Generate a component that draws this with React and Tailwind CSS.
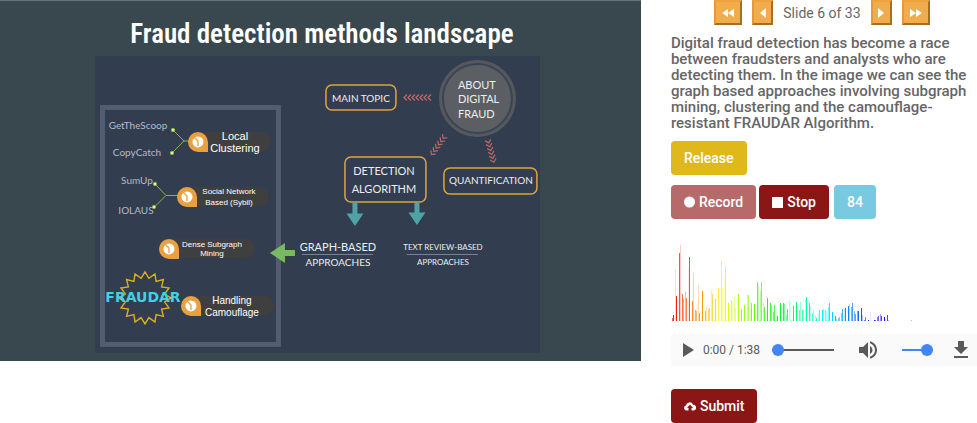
import React from "react";

const PINS = [
  { x: 198, y: 142, end: 271, cx: 235, size: 11, lines: [["Local", 140], ["Clustering", 152]] },
  { x: 187, y: 197, end: 269, cx: 229, size: 8, lines: [["Social Network", 194], ["Based (Sybil)", 205]] },
  { x: 169, y: 249, end: 255, cx: 212, size: 8, lines: [["Dense Subgraph", 247], ["Mining", 256]] },
  { x: 191, y: 306, end: 274, cx: 232, size: 10, lines: [["Handling", 304], ["Camouflage", 316]] },
];

// [x, height, opacity] for each bar of the spectrum
const BARS = [
  [1, 3, 0.6], [2, 6, 0.9], [4, 52, 0.15], [5, 25, 1], [8, 68, 0.8], [9, 76, 0.25], [11, 27, 0.7], [12, 22, 0.5],
  [14, 29, 0.4], [15, 23, 0.7], [17, 52, 0.1], [18, 64, 1], [21, 20, 0.8], [22, 48, 0.3], [24, 11, 0.6], [25, 10, 0.6],
  [27, 36, 0.3], [28, 8, 0.9], [31, 30, 1], [34, 10, 0.8], [35, 14, 0.3], [37, 12, 0.6], [38, 13, 0.6], [40, 31, 0.35],
  [41, 27, 0.7], [44, 22, 1], [45, 48, 0.08], [47, 33, 0.7], [48, 33, 0.15], [50, 60, 0.85], [51, 33, 0.4], [53, 44, 0.25],
  [54, 54, 1], [57, 18, 1], [60, 21, 0.7], [61, 20, 0.25], [63, 25, 0.4], [64, 13, 0.4], [66, 8, 0.2], [67, 27, 0.9],
  [70, 12, 1], [73, 16, 0.9], [74, 15, 0.2], [76, 26, 0.4], [77, 26, 0.6], [79, 12, 0.2], [80, 18, 0.9], [83, 17, 1],
  [86, 39, 0.9], [87, 36, 0.3], [89, 30, 0.4], [90, 39, 0.7], [92, 18, 0.3], [93, 14, 0.8], [96, 23, 1], [99, 18, 0.8],
  [100, 16, 0.5], [102, 9, 0.6], [103, 16, 0.7], [105, 7, 0.2], [106, 5, 1], [109, 18, 1], [112, 18, 0.9], [113, 17, 0.5],
  [115, 6, 0.5], [116, 12, 0.8], [118, 21, 0.25], [119, 19, 0.15], [122, 15, 1], [125, 19, 1], [126, 17, 0.3],
  [128, 11, 0.6], [129, 19, 0.4], [131, 11, 0.7], [132, 12, 0.4], [134, 22, 0.25], [135, 24, 1], [138, 18, 0.9],
  [139, 15, 0.3], [141, 8, 0.7], [142, 11, 0.4], [144, 6, 0.3], [145, 3, 0.9], [147, 8, 0.3], [148, 11, 0.8], [151, 11, 1],
  [152, 12, 0.5], [154, 11, 0.6], [155, 10, 0.3], [157, 14, 0.5], [158, 18, 0.9], [161, 9, 1], [164, 5, 1], [165, 2, 0.4],
  [167, 3, 0.6], [168, 4, 0.6], [170, 8, 0.5], [171, 12, 0.8], [173, 13, 0.2], [174, 13, 1], [177, 15, 1], [178, 17, 0.3],
  [180, 14, 0.5], [181, 18, 0.7], [183, 10, 0.5], [184, 7, 0.6], [186, 10, 0.5], [187, 10, 0.9], [190, 13, 0.9],
  [191, 6, 0.3], [193, 1, 0.6], [194, 4, 0.6], [197, 1, 0.9], [199, 9, 0.1], [203, 1, 0.9], [204, 1, 0.5], [206, 4, 0.5],
  [207, 5, 0.6], [209, 7, 0.4], [210, 5, 0.8], [213, 4, 1], [214, 2, 0.2], [216, 6, 0.8], [217, 1, 0.3], [240, 1, 0.4],
];

const BURST = Array.from({ length: 32 }, (_, i) => {
  const r = i % 2 === 0 ? 26 : 20;
  const a = (i * Math.PI) / 16 - Math.PI / 2;
  return `${145 + r * Math.cos(a)},${298 + r * Math.sin(a)}`;
}).join(" ");

function Chevrons({ x, y, angle, count }) {
  return (
    <g transform={`translate(${x} ${y}) rotate(${angle})`} fill="none" stroke="#c06a68" strokeWidth="1.200">
      {Array.from({ length: count }, (_, i) => (
        <path key={i} d={`M${i * 4} -3l3 3l-3 3`} />
      ))}
    </g>
  );
}

function Pin({ pin }) {
  const { x, y, end, cx, size, lines } = pin;
  return (
    <g>
      <rect x={x} y={y - 10} width={end - x} height="19" rx="9" fill="#3f3f40" />
      <path d={`M${x} ${y - 10}a10 10 0 1 0 0 20h10v-10a10 10 0 0 0 -10 -10z`} fill="#e8a040" />
      <circle cx={x} cy={y} r="5.500" fill="#fff" />
      <path d={`M${x - 4} ${y - 5}l4 4v5`} fill="none" stroke="#e8a040" strokeWidth="1.300" />
      {lines.map(([text, ty]) => (
        <text key={text} x={cx} y={ty} fontSize={size} textAnchor="middle" fill="#fff" className="font-['Liberation_Sans',sans-serif]">
          {text}
        </text>
      ))}
    </g>
  );
}

function Slide() {
  return (
    <svg viewBox="0 0 641 361" className="block h-auto w-full bg-[#37474f] font-[Lato,sans-serif]" role="img" aria-label="Fraud detection methods landscape">
      <rect width="641" height="361" fill="#38484e" />
      <rect width="641" height="1" fill="#66737b" />
      <text x="322" y="43" fontSize="27" fontWeight="600" textAnchor="middle" fill="#fff" className="font-['Roboto_Condensed','Liberation_Sans_Narrow',sans-serif]">
        Fraud detection methods landscape
      </text>
      <rect x="95" y="56" width="445" height="297" fill="#323d50" />
      <rect x="102.500" y="107.500" width="176" height="237" fill="none" stroke="#545c70" strokeWidth="5" />

      <circle cx="477.500" cy="98.500" r="37" fill="#5b5e63" stroke="#55595f" strokeWidth="3" />
      <circle cx="477.500" cy="98.500" r="34.500" fill="#5b5e63" stroke="#3c4352" strokeWidth="2" />
      <g fill="#eceef1" fontSize="11">
        <text x="458" y="89">ABOUT</text>
        <text x="458" y="103">DIGITAL</text>
        <text x="458" y="118">FRAUD</text>
      </g>

      <g fill="none" stroke="#e0a43a" strokeWidth="1.500">
        <rect x="326" y="85" width="70" height="25" rx="6" />
        <rect x="345" y="157" width="81" height="45" rx="6" />
        <rect x="444" y="168" width="93" height="26" rx="6" />
      </g>
      <g fill="#eceef1" textAnchor="middle">
        <text x="361" y="102" fontSize="10">MAIN TOPIC</text>
        <text x="384" y="175" fontSize="11">DETECTION</text>
        <text x="384" y="193" fontSize="11">ALGORITHM</text>
        <text x="491" y="184" fontSize="10">QUANTIFICATION</text>
        <text x="338" y="251" fontSize="11">GRAPH-BASED</text>
        <text x="338" y="266" fontSize="10">APPROACHES</text>
        <text x="443" y="250" fontSize="8">TEXT REVIEW-BASED</text>
        <text x="443" y="265" fontSize="8">APPROACHES</text>
      </g>
      <path d="M302 254.500h71M407 254.500h71" stroke="#7d8594" strokeWidth="1" />

      <Chevrons x={431} y={97.5} angle={180} count={7} />
      <Chevrons x={445} y={136} angle={126} count={6} />
      <Chevrons x={488} y={140} angle={75} count={6} />

      <path d="M352.500 202.500h5v11h6l-8.500 12.500l-8.500 -12.500h6zM414.500 202.500h5v10h6l-8.500 12.500l-8.500 -12.500h6z" fill="#4fa3a5" />
      <path d="M270 253l15 -10v7h10v6h-10v7z" fill="#78ba62" />

      <g stroke="#8fb53f" strokeWidth="1" fill="none">
        <path d="M173 130l11 11l-12 12M184 141h5" />
        <path d="M155 184l11 11.500l-12 12M166 195.500h12" />
      </g>
      <g stroke="#8fb53f" strokeWidth="1" fill="#e3eeb4">
        <circle cx="173" cy="130" r="1.700" />
        <circle cx="172" cy="153" r="1.700" />
        <circle cx="155" cy="184" r="1.700" />
        <circle cx="154" cy="207" r="1.700" />
      </g>
      <g fill="#b6bbc6" fontSize="10" textAnchor="middle">
        <text x="138" y="129">GetTheScoop</text>
        <text x="137" y="156">CopyCatch</text>
        <text x="137" y="184">SumUp</text>
        <text x="136" y="214">IOLAUS</text>
      </g>

      <polygon points={BURST} fill="none" stroke="#d9b01f" strokeWidth="1.400" />
      <text x="143" y="302" fontSize="14" fontWeight="700" textAnchor="middle" fill="#45cfe0" className="font-['DejaVu_Sans',sans-serif]">
        FRAUDAR
      </text>

      {PINS.map((pin) => (
        <Pin key={pin.y} pin={pin} />
      ))}
    </svg>
  );
}

function NavButton({ label, wide, children }) {
  return (
    <button
      type="button"
      aria-label={label}
      className={`flex h-[25px] items-center justify-center border-2 border-t-[#f0a23c] border-r-[#a86e1e] border-b-[#a86e1e] border-l-[#e59a35] bg-[#f0ad4e] ${wide ? "w-[28px]" : "w-[21px]"}`}
    >
      {children}
    </button>
  );
}

const BTN = "flex h-[34px] items-center gap-1 rounded-[4px] px-[13px] text-[14px] font-medium text-white";

const RANGE =
  "h-3 cursor-pointer appearance-none bg-transparent [&::-webkit-slider-runnable-track]:h-[2px] [&::-webkit-slider-thumb]:-mt-[5px] [&::-webkit-slider-thumb]:h-3 [&::-webkit-slider-thumb]:w-3 [&::-webkit-slider-thumb]:appearance-none [&::-webkit-slider-thumb]:rounded-full [&::-webkit-slider-thumb]:bg-[#4285f4]";

function Spectrum() {
  return (
    <svg width="245" height="80" className="mt-[22px] block" shapeRendering="crispEdges" aria-hidden="true">
      {BARS.map(([x, h, o]) => (
        <rect key={x} x={x} y={80 - h} width="1" height={h} fill={`hsl(${Math.round(x * 1.18)} 100% 50%)`} opacity={o} />
      ))}
    </svg>
  );
}

function Player() {
  return (
    <div className="mt-[13px] flex h-8 items-center bg-[#fafafa] pl-1 text-[#5a5a5a]">
      <button type="button" aria-label="Play">
        <svg width="24" height="24" viewBox="0 0 24 24" fill="currentColor"><path d="M8 5v14l11-7z" /></svg>
      </button>
      <span className="ml-1 whitespace-nowrap text-[12px]">0:00 / 1:38</span>
      <input type="range" aria-label="Seek" min="0" max="98" defaultValue="0" className={`${RANGE} ml-3 w-[61px] min-w-0 grow [&::-webkit-slider-runnable-track]:bg-[#5a5a5a]`} />
      <button type="button" aria-label="Mute" className="ml-[22px]">
        <svg width="24" height="24" viewBox="0 0 24 24" fill="currentColor">
          <path d="M3 9v6h4l5 5V4L7 9H3zm13.5 3c0-1.770-1.020-3.290-2.500-4.030v8.050c1.480-.73 2.500-2.250 2.500-4.020zM14 3.230v2.060c2.890.86 5 3.540 5 6.710s-2.110 5.850-5 6.710v2.060c4.010-.91 7-4.490 7-8.770s-2.990-7.860-7-8.770z" />
        </svg>
      </button>
      <input type="range" aria-label="Volume" min="0" max="100" defaultValue="100" className={`${RANGE} ml-[22px] w-[31px] [&::-webkit-slider-runnable-track]:bg-[#4285f4]`} />
      <button type="button" aria-label="Download" className="ml-4 mr-1">
        <svg width="24" height="24" viewBox="0 0 24 24" fill="currentColor"><path d="M19 9h-4V3H9v6H5l7 7 7-7zM5 18v2h14v-2H5z" /></svg>
      </button>
    </div>
  );
}

export default function App() {
  return (
    <main className="flex items-start bg-white font-[Roboto,sans-serif] text-[#666]">
      <div className="w-[65.6%] shrink-0">
        <Slide />
      </div>
      <div className="min-w-0 grow pl-[30px]">
        <nav className="flex items-center justify-center gap-[10px] pr-1">
          <NavButton label="First slide" wide>
            <svg width="12" height="8" viewBox="0 0 12 8" fill="#fff"><path d="M6 0v8L0 4zM12 0v8L6 4z" /></svg>
          </NavButton>
          <NavButton label="Previous slide">
            <svg width="6" height="10" viewBox="0 0 6 10" fill="#fff"><path d="M6 0v10L0 5z" /></svg>
          </NavButton>
          <span className="text-[14px] leading-[24px] whitespace-nowrap">Slide 6 of 33</span>
          <NavButton label="Next slide">
            <svg width="6" height="10" viewBox="0 0 6 10" fill="#fff"><path d="M0 0v10l6-5z" /></svg>
          </NavButton>
          <NavButton label="Last slide" wide>
            <svg width="12" height="8" viewBox="0 0 12 8" fill="#fff"><path d="M0 0v8l6-4zM6 0v8l6-4z" /></svg>
          </NavButton>
        </nav>
        <p className="mt-[10px] text-[15px] leading-4 font-medium">
          Digital fraud detection has become a race between fraudsters and analysts who are detecting them. In the image we can see the graph based approaches involving subgraph mining, clustering and the camouflage-resistant FRAUDAR Algorithm.
        </p>
        <button type="button" className={`${BTN} mt-[10px] bg-[#dfb81c]`}>Release</button>
        <div className="mt-[10px] flex">
          <button type="button" className={`${BTN} bg-[#b66a6a]`}>
            <svg width="11" height="12" viewBox="0 0 11 12" fill="#fff"><circle cx="5.500" cy="6" r="5.500" /></svg>
            Record
          </button>
          <button type="button" className={`${BTN} ml-[3px] bg-[#8b1616]`}>
            <svg width="11" height="12" viewBox="0 0 11 12" fill="#fff"><path d="M0 1h11v11H0z" /></svg>
            Stop
          </button>
          <button type="button" className={`${BTN} ml-[5px] bg-[#78c9e1]`}>84</button>
        </div>
        <Spectrum />
        <Player />
        <button type="button" className={`${BTN} mt-[23px] bg-[#8b1616]`}>
          <svg width="12" height="12" viewBox="0 0 12 12" fill="#fff">
            <path d="M4.500 10.500H2.700A2.500 2.500 0 0 1 1.900 5.600 3.700 3.700 0 0 1 9 4.700a2.900 2.900 0 0 1 .3 5.800H7.500V8H9L6 4.600 3 8h1.500z" />
          </svg>
          Submit
        </button>
      </div>
    </main>
  );
}
